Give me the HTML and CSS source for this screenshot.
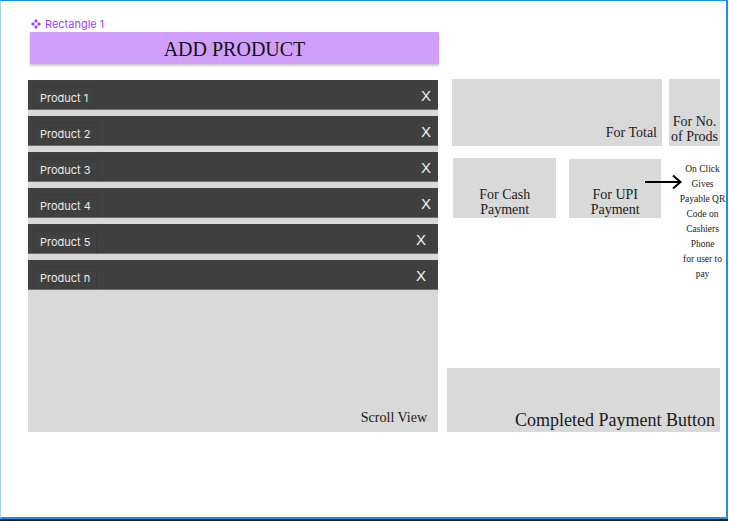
FILE: index.html
```html
<!DOCTYPE html>
<html>
<head>
<meta charset="utf-8">
<link rel="stylesheet" href="styles.css">
</head>
<body>
<div class="frame">
  <div class="header">
    <div class="label">
      <svg class="comp-icon" width="10" height="10" viewBox="0 0 10 10"><path d="M5 0L7 2L5 4L3 2Z M0 5L2 3L4 5L2 7Z M10 5L8 3L6 5L8 7Z M5 10L7 8L5 6L3 8Z" fill="#9747ff"/></svg>
      <span>Rectangle 1</span>
    </div>
    <div class="add-bar">ADD PRODUCT</div>
  </div>
  <div class="main">
    <div class="list">
      <div class="row"><span class="chip">Product 1</span><span class="x">X</span></div>
      <div class="row"><span class="chip">Product 2</span><span class="x">X</span></div>
      <div class="row"><span class="chip">Product 3</span><span class="x">X</span></div>
      <div class="row"><span class="chip">Product 4</span><span class="x">X</span></div>
      <div class="row"><span class="chip">Product 5</span><span class="x x-in">X</span></div>
      <div class="row"><span class="chip">Product n</span><span class="x x-in">X</span></div>
      <div class="scroll-label">Scroll View</div>
    </div>
    <div class="side">
      <div class="top-row">
        <div class="box total">For Total</div>
        <div class="box prods">For No.<br>of Prods</div>
      </div>
      <div class="pay-row">
        <div class="box cash">For Cash<br>Payment</div>
        <div class="box upi">For UPI<br>Payment</div>
        <svg class="arrow" width="38" height="16" viewBox="0 0 38 16"><path d="M0 8H35 M28 1.5L35.5 8L28 14.5" fill="none" stroke="#000" stroke-width="2"/></svg>
        <div class="note">On Click<br>Gives<br>Payable QR<br>Code on<br>Cashiers<br>Phone<br>for user to<br>pay</div>
      </div>
      <div class="box done">Completed Payment Button</div>
    </div>
  </div>
</div>
</body>
</html>
```
FILE: styles.css
```css
html, body {
  margin: 0;
  padding: 0;
  background: #ffffff;
}
body {
  width: 729px;
  height: 521px;
  overflow: hidden;
}
.frame {
  box-sizing: border-box;
  width: 728px;
  height: 519px;
  border-top: 1px solid #1a8fe3;
  border-left: 1px solid #a6d2f2;
  border-right: 2px solid #1a8fe3;
  border-bottom: 2px solid #1a8fe3;
  box-shadow: 0 2px 0 #1e1e1e;
  padding: 15px 0 0 27px;
  font-family: "Liberation Serif", serif;
  color: #1a1a1a;
}
.header {
  width: 412px;
}
.label {
  display: flex;
  align-items: center;
  gap: 4px;
  height: 16px;
  margin-left: 3px;
  font-family: Inter, "Liberation Sans", sans-serif;
  font-size: 11px;
  color: #9747ff;
}
.comp-icon {
  display: block;
}
.add-bar {
  margin-left: 2px;
  width: 409px;
  height: 32px;
  box-sizing: border-box;
  padding-top: 3px;
  background: #d09efc;
  box-shadow: 0 2px 2px rgba(0, 0, 0, 0.22);
  text-align: center;
  font-size: 20px;
  line-height: 29px;
  color: #111;
}
.main {
  display: flex;
  margin-top: 15px;
}
.list {
  flex-shrink: 0;
  margin-top: 1px;
  width: 410px;
  height: 352px;
  background: #d9d9d9;
  display: flex;
  flex-direction: column;
  gap: 6px;
}
.row {
  height: 30px;
  box-sizing: border-box;
  background: #404040;
  border-bottom: 1px solid #6e6e6e;
  display: flex;
  align-items: flex-end;
  justify-content: space-between;
  padding: 0 7px 0 5px;
}
.chip {
  box-sizing: border-box;
  height: 23px;
  padding: 0 6px;
  border: 1px solid #3a3a3a;
  border-bottom: none;
  border-radius: 4px 4px 0 0;
  font-family: Inter, "Liberation Sans", sans-serif;
  font-size: 11px;
  line-height: 22px;
  color: #ececec;
}
.x {
  align-self: center;
  font-family: "Liberation Sans", sans-serif;
  font-size: 15px;
  line-height: 16px;
  color: #f2f2f2;
  padding-top: 2px;
}
.x-in {
  margin-right: 5px;
}
.scroll-label {
  margin-top: auto;
  align-self: flex-end;
  padding: 0 11px 6px 0;
  font-size: 14px;
  line-height: 16px;
}
.side {
  flex-shrink: 0;
  margin-left: 9px;
  width: 279px;
  height: 353px;
  display: flex;
  flex-direction: column;
}
.box {
  background: #d9d9d9;
  box-sizing: border-box;
  font-size: 14px;
}
.top-row {
  display: flex;
  gap: 7px;
  margin-left: 5px;
}
.total {
  width: 210px;
  height: 67px;
  display: flex;
  align-items: flex-end;
  justify-content: flex-end;
  padding: 0 5px 5px 0;
  line-height: 16px;
}
.prods {
  width: 51px;
  height: 67px;
  display: flex;
  align-items: flex-end;
  justify-content: center;
  text-align: center;
  line-height: 15px;
  padding-bottom: 2px;
  white-space: nowrap;
}
.pay-row {
  position: relative;
  display: flex;
  align-items: flex-start;
  margin-top: 12px;
}
.cash {
  margin-left: 6px;
  width: 104px;
  height: 60px;
}
.upi {
  margin-left: 13px;
  margin-top: 1px;
  width: 92px;
  height: 59px;
}
.cash, .upi {
  display: flex;
  align-items: flex-end;
  justify-content: center;
  text-align: center;
  line-height: 15px;
  padding-bottom: 1px;
}
.arrow {
  position: absolute;
  left: 198px;
  top: 16px;
}
.note {
  flex-shrink: 0;
  margin-left: 18px;
  margin-top: 4px;
  width: 47px;
  text-align: center;
  font-size: 9.5px;
  line-height: 15px;
  white-space: nowrap;
}
.done {
  margin-top: auto;
  width: 273px;
  height: 64px;
  display: flex;
  align-items: flex-end;
  justify-content: flex-end;
  padding: 0 5px 2px 0;
  font-size: 18px;
  line-height: 20px;
}
```
